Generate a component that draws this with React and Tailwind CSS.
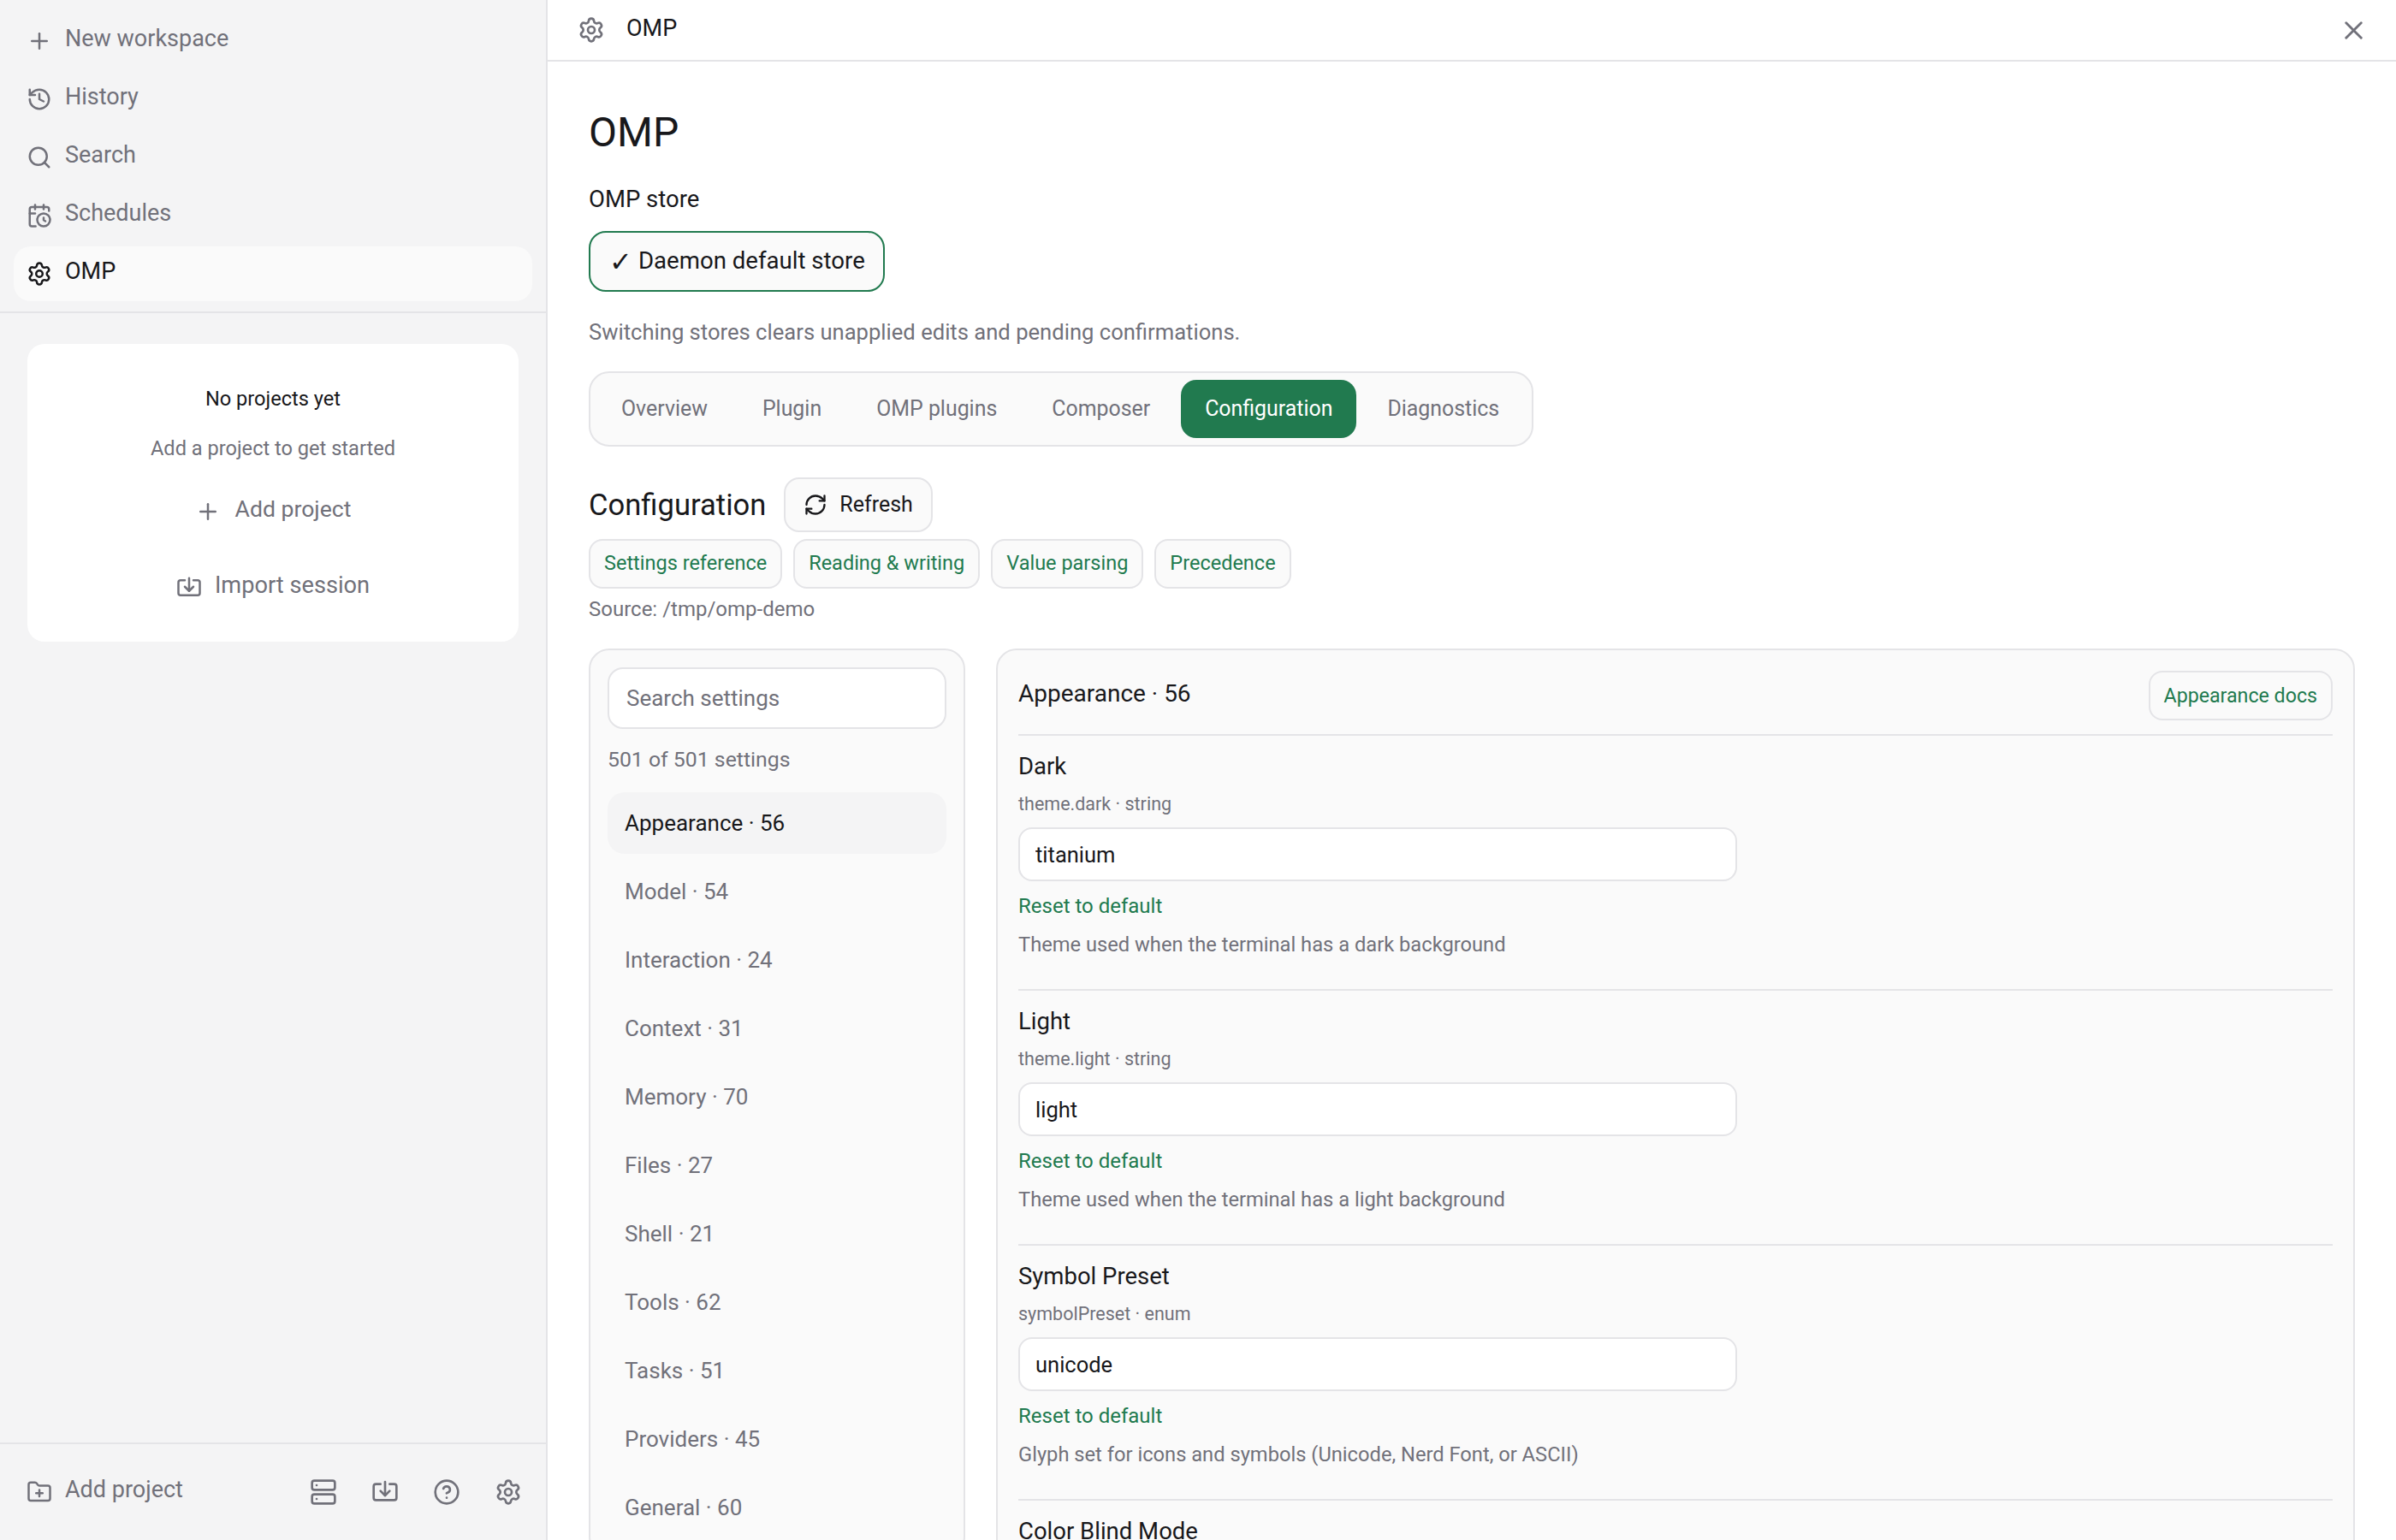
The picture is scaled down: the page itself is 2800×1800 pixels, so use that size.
import {
  CalendarClock,
  CircleHelp,
  FolderPlus,
  History,
  Import,
  Plus,
  RefreshCw,
  Search,
  Server,
  Settings,
  X,
} from "lucide-react";

const navItems = [
  { label: "New workspace", icon: Plus },
  { label: "History", icon: History },
  { label: "Search", icon: Search },
  { label: "Schedules", icon: CalendarClock },
  { label: "OMP", icon: Settings, active: true },
];

const tabs = ["Overview", "Plugin", "OMP plugins", "Composer", "Configuration", "Diagnostics"];
const docLinks = ["Settings reference", "Reading & writing", "Value parsing", "Precedence"];

const groups = [
  "Appearance · 56",
  "Model · 54",
  "Interaction · 24",
  "Context · 31",
  "Memory · 70",
  "Files · 27",
  "Shell · 21",
  "Tools · 62",
  "Tasks · 51",
  "Providers · 45",
  "General · 60",
];

const settings = [
  { name: "Dark", meta: "theme.dark · string", value: "titanium", desc: "Theme used when the terminal has a dark background" },
  { name: "Light", meta: "theme.light · string", value: "light", desc: "Theme used when the terminal has a light background" },
  { name: "Symbol Preset", meta: "symbolPreset · enum", value: "unicode", desc: "Glyph set for icons and symbols (Unicode, Nerd Font, or ASCII)" },
  { name: "Color Blind Mode", meta: "theme.colorBlindMode · boolean", value: "false", desc: "Use blue instead of green for diff additions" },
];

function SettingRow({ setting }) {
  return (
    <div className="border-b-2 border-[#e4e4e7] pt-[18px] pb-[36px]">
      <div className="text-[27.5px] leading-[36px] text-[#18181b]">{setting.name}</div>
      <div className="mt-[12px] text-[21.5px] leading-[28px] text-[#71717a]">{setting.meta}</div>
      <input
        readOnly
        value={setting.value}
        className="mt-[13px] block h-[63px] w-[840px] rounded-[16px] border-2 border-[#e4e4e7] bg-white px-[18px] text-[25.5px] text-[#18181b] outline-none"
      />
      <div className="mt-[13px] text-[24px] leading-[32px] text-[#217a4f]">Reset to default</div>
      <div className="mt-[13px] text-[23.7px] leading-[32px] text-[#71717a]">{setting.desc}</div>
    </div>
  );
}

export default function App() {
  return (
    <div className="flex h-[1800px] w-[2800px] overflow-hidden bg-white font-['Roboto',sans-serif] text-[#18181b]">
      <aside className="flex w-[640px] shrink-0 flex-col border-r-2 border-[#e4e4e7] bg-[#f4f4f5]">
        <nav className="flex flex-col gap-[4px] border-b-2 border-[#e4e4e7] px-[16px] pt-[16px] pb-[12px]">
          {navItems.map(({ label, icon: Icon, active }) => (
            <div
              key={label}
              className={`flex h-[64px] items-center gap-[15px] rounded-[20px] px-[15px] text-[27px] ${
                active ? "bg-[#fafafa] text-[#18181b]" : "text-[#71717a]"
              }`}
            >
              <Icon size={30} className="shrink-0" />
              <span className="-translate-y-[3px]">{label}</span>
            </div>
          ))}
        </nav>

        <div className="mx-[32px] mt-[36px] flex h-[348px] flex-col items-center rounded-[20px] bg-white">
          <div className="mt-[48px] text-[23.6px] leading-[32px] text-[#18181b]">No projects yet</div>
          <div className="mt-[26px] text-[23.6px] leading-[32px] text-[#71717a]">Add a project to get started</div>
          <div className="mt-[34px] flex h-[48px] items-center gap-[17px] text-[26.6px] text-[#71717a]">
            <Plus size={30} />
            <span className="-translate-y-[3px]">Add project</span>
          </div>
          <div className="mt-[41px] flex h-[48px] items-center gap-[15px] text-[27.2px] text-[#71717a]">
            <Import size={30} />
            <span className="-translate-y-[3px]">Import session</span>
          </div>
        </div>

        <div className="mt-auto flex h-[114px] items-center justify-between border-t-2 border-[#e4e4e7] pr-[28px] pl-[31px] text-[#71717a]">
          <div className="flex items-center gap-[15px] text-[27px]">
            <FolderPlus size={30} />
            <span className="-translate-y-[3px]">Add project</span>
          </div>
          <div className="flex items-center gap-[40px]">
            <Server size={32} />
            <Import size={32} />
            <CircleHelp size={32} />
            <Settings size={32} />
          </div>
        </div>
      </aside>

      <main className="flex min-w-0 flex-1 flex-col">
        <header className="flex h-[72px] shrink-0 items-center justify-between border-b-2 border-[#e4e4e7] pr-[32px] pl-[35px]">
          <div className="flex items-center gap-[25px]">
            <Settings size={32} className="text-[#71717a]" />
            <span className="-translate-y-[2px] text-[27px] text-[#18181b]">OMP</span>
          </div>
          <X size={35} className="text-[#71717a]" />
        </header>

        <div className="px-[48px]">
          <h1 className="mt-[55px] text-[48px] leading-[56px] font-normal">OMP</h1>
          <div className="mt-[32px] text-[27.5px] leading-[36px]">OMP store</div>
          <button className="mt-[19px] flex h-[71px] w-[346px] items-center rounded-[20px] border-2 border-[#217a4f] bg-[#fafafa] pl-[22px] text-[27.6px]">
            <span className="w-[34px] shrink-0 text-left text-[32px] leading-none">✓</span>
            <span className="-translate-y-[1px]">Daemon default store</span>
          </button>
          <p className="mt-[31px] text-[25.6px] leading-[32px] text-[#71717a]">
            Switching stores clears unapplied edits and pending confirmations.
          </p>

          <div className="mt-[30px] flex h-[88px] w-fit items-center gap-[8px] rounded-[24px] border-2 border-[#e4e4e7] bg-[#fafafa] pr-[10px] pl-[8px]">
            {tabs.map((tab) => (
              <div
                key={tab}
                className={`flex h-[68px] items-center rounded-[18px] px-[28px] text-[24.9px] ${
                  tab === "Configuration" ? "bg-[#217a4f] text-white" : "text-[#71717a]"
                }`}
              >
                {tab}
              </div>
            ))}
          </div>

          <div className="mt-[36px] flex items-center gap-[21px]">
            <h2 className="text-[34.6px] leading-[44px] font-normal">Configuration</h2>
            <button className="flex h-[64px] items-center gap-[14px] rounded-[18px] border-2 border-[#e4e4e7] bg-[#fafafa] px-[21px] text-[25px]">
              <RefreshCw size={28} />
              Refresh
            </button>
          </div>

          <div className="mt-[8px] flex gap-[13px]">
            {docLinks.map((link) => (
              <div
                key={link}
                className="flex h-[58px] items-center rounded-[16px] border-2 border-[#e4e4e7] bg-[#fafafa] px-[16px] text-[23.5px] text-[#217a4f]"
              >
                {link}
              </div>
            ))}
          </div>
          <div className="mt-[8px] text-[24px] leading-[32px] text-[#71717a]">Source: /tmp/omp-demo</div>

          <div className="mt-[30px] flex items-start gap-[36px]">
            <div className="w-[440px] shrink-0 rounded-[24px] border-2 border-[#e4e4e7] bg-[#fafafa] p-[20px]">
              <input
                readOnly
                placeholder="Search settings"
                className="block h-[72px] w-full rounded-[18px] border-2 border-[#e4e4e7] bg-white px-[20px] text-[26px] outline-none placeholder:text-[#71717a]"
              />
              <div className="mt-[20px] text-[24.8px] leading-[32px] text-[#71717a]">501 of 501 settings</div>
              <div className="mt-[22px] flex flex-col gap-[8px]">
                {groups.map((group, i) => (
                  <div
                    key={group}
                    className={`flex h-[72px] items-center rounded-[20px] px-[20px] text-[26px] ${
                      i === 0 ? "bg-[#f4f4f5] text-[#18181b]" : "text-[#71717a]"
                    }`}
                  >
                    {group}
                  </div>
                ))}
              </div>
            </div>

            <div className="min-w-0 flex-1 rounded-[24px] border-2 border-[#e4e4e7] bg-[#fafafa] px-[24px] pt-[24px]">
              <div className="flex items-center justify-between border-b-2 border-[#e4e4e7] pb-[16px]">
                <span className="-translate-y-[2px] text-[28px] text-[#18181b]">Appearance · 56</span>
                <div className="flex h-[58px] items-center rounded-[16px] border-2 border-[#e4e4e7] bg-[#fafafa] px-[16px] text-[23.2px] text-[#217a4f]">
                  Appearance docs
                </div>
              </div>
              {settings.map((setting) => (
                <SettingRow key={setting.name} setting={setting} />
              ))}
            </div>
          </div>
        </div>
      </main>
    </div>
  );
}
